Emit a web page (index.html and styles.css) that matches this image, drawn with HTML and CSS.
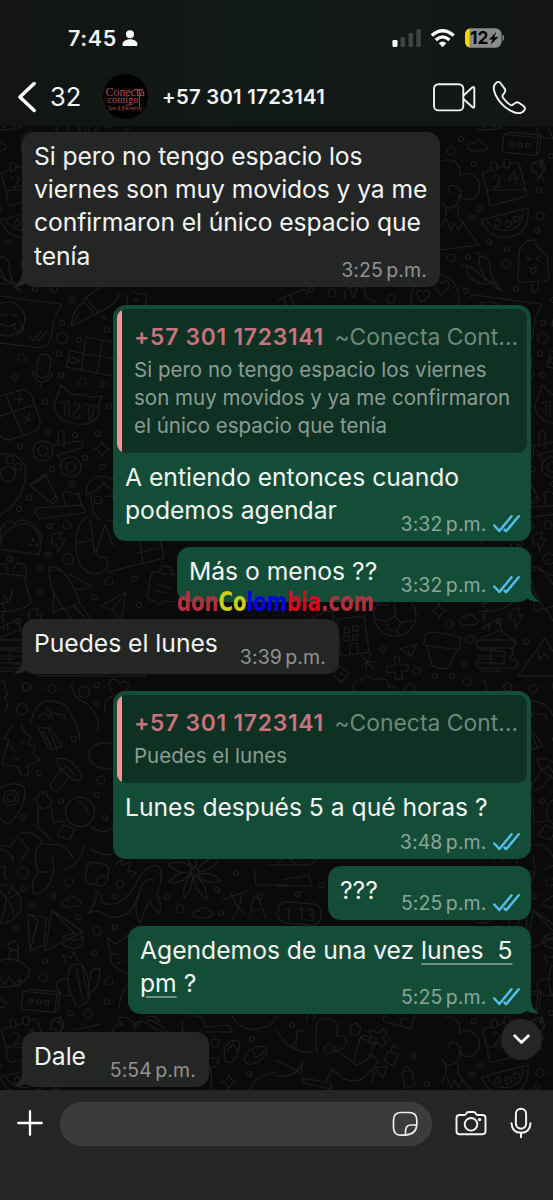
FILE: index.html
```html
<!DOCTYPE html>
<html lang="es">
<head>
<meta charset="utf-8">
<title>Chat</title>
<link rel="stylesheet" href="styles.css">
</head>
<body>
<svg class="defs" width="0" height="0" aria-hidden="true">
  <symbol id="ticks" viewBox="0 0 27 18"><path d="M1.300 10.500 6.300 16 18.500 1.300M12.500 15.800 13.300 16 25.700 1.300M11.500 14.600l1.600 1.500" fill="none" stroke="#53bdeb" stroke-width="2.500" stroke-linecap="round" stroke-linejoin="round"/></symbol>
  <symbol id="tail" viewBox="0 0 18 18"><path d="M8 0V4C8 9.500 4.500 14.500 0 17.200C5 18 9 16.500 11.500 14.500L18 17V0Z"/></symbol>
</svg>
<div class="phone">
  <header class="top">
    <div class="status">
      <span class="clock">7:45</span>
      <svg class="person" width="16" height="17" viewBox="0 0 16 17" fill="#fff"><circle cx="8" cy="4.200" r="4"/><path d="M.5 14.500C.5 11.500 4 9.300 8 9.300s7.500 2.200 7.500 5.200c0 1-.6 1.600-1.500 1.600H2c-.9 0-1.500-.6-1.500-1.600Z"/></svg>
      <svg class="radio" width="112" height="22" viewBox="392 26 112 22">
        <rect x="392.500" y="39" width="5" height="7" rx="1.300" fill="#fff"/>
        <g fill="#3d4241"><rect x="400.500" y="36" width="4.600" height="10" rx="1.300"/><rect x="408.500" y="32" width="4.600" height="14" rx="1.300"/><rect x="416.300" y="28" width="4.600" height="18" rx="1.300"/></g>
        <g fill="none" stroke="#fff" stroke-width="3.300"><path d="M431.800 34.400Q442.500 25 453.700 34.400"/><path d="M435.800 39Q442.500 32.800 449.500 39"/></g>
        <path d="M438.800 42.200Q442.500 39 446.300 42.200L442.500 46.200Z" fill="#fff"/>
        <clipPath id="cell"><rect x="465" y="27.300" width="36.500" height="19.400" rx="6"/></clipPath>
        <g clip-path="url(#cell)"><rect x="465" y="27" width="37" height="20" fill="#898b8a"/><rect x="465" y="27" width="4.500" height="20" fill="#ffd60a"/></g>
        <path d="M502.300 33.500Q504.600 34.500 504.300 37T502.300 40.500Z" fill="#7b7d7c"/>
        <text x="470" y="43.300" class="charge" textLength="18.500" lengthAdjust="spacingAndGlyphs">12</text>
        <path d="M496.300 31 488.800 38.500H492.600L490.500 43.800 498.500 36H494.400Z" fill="#050505"/>
      </svg>
    </div>
    <div class="contact">
      <svg class="back" width="20" height="32" viewBox="0 0 20 32" fill="none" stroke="#fff" stroke-width="3.500" stroke-linecap="round" stroke-linejoin="round"><path d="M17.200 2.500 2.900 16 17.200 29.500"/></svg>
      <span class="unread">32</span>
      <svg class="avatar" width="45" height="45" viewBox="0 0 45 45"><circle cx="22.500" cy="22.500" r="22.500" fill="#000"/>
        <g fill="#b34a50" class="logo"><text x="2.500" y="22" font-size="11.500" textLength="39" lengthAdjust="spacingAndGlyphs">Conecta</text><text x="4.500" y="29" font-size="10" textLength="31" lengthAdjust="spacingAndGlyphs">contigo</text></g>
        <path d="M36.500 15v18M31 15.500h9M23 30q2 4 5-1" fill="none" stroke="#b34a50" stroke-width=".8"/>
        <text x="5" y="36" class="motto" textLength="34" lengthAdjust="spacingAndGlyphs">Spa &amp; Bienestar</text></svg>
      <span class="number">+57 301 1723141</span>
      <svg class="calls" width="96" height="36" viewBox="431 79 96 36" fill="none" stroke="#f1f2f1" stroke-width="1.900" stroke-linejoin="round" stroke-linecap="round">
        <rect x="434" y="84.200" width="29.300" height="26.200" rx="4.500"/><path d="M463.500 95.500 472.500 87.300Q474.300 86 474.300 88.500V106Q474.300 108.500 472.500 107.300L463.500 99"/>
        <path d="M496.300 82.700Q498.800 80.800 500.600 83.300L504.600 88.600Q506.100 90.800 504.300 93L502.800 95Q502 96.300 503 97.700Q506.500 102.500 510.300 104.800Q511.900 105.700 513 104.600L515.200 103Q517 101.600 519.200 103L523.600 106Q525.800 107.700 524.300 110.200Q521.400 114.500 514.700 112.500C504.500 109 496.500 99.500 494.200 91Q492.700 85.500 496.300 82.700Z"/>
      </svg>
    </div>
  </header>

  <main class="chat">
    <svg class="wallpaper" width="553" height="964" viewBox="0 126 553 964">
      <defs>
        <path id="bolt" d="M0 3 9 0 8 7H13L6 20 5 12H0Z"/>
        <path id="cloud" d="M3 11Q-2 10 1 6Q3 3 6 5Q8-1 12 2Q16 3 15 5Q20 5 19 9Q17 13 11 11Q7 14 3 11Z"/>
        <path id="spark" d="M0-8Q1-1 8 0Q1 1 0 8Q-1 1-8 0Q-1-1 0-8Z"/>
        <g id="tile">
          <g transform="rotate(6 521 144)"><rect x="503" y="136" width="34" height="18" rx="2"/><path d="M505 136l4-3h31l-3 3M540 133v16l-3 4"/><circle cx="512" cy="145" r="2.300"/><circle cx="520" cy="145" r="2.300"/><circle cx="528" cy="145" r="2.300"/></g>
          <use href="#cloud" x="468" y="139"/>
          <path d="M491 170 484 172Q482 173 483 176L487 190H526L519 164Q518 161 515 162L510 164M498 168l6-2M487 190 489 203Q490 206 494 205L524 197Q527 196 526 192L520 183"/>
          <rect x="491" y="162" width="6" height="9" rx="3"/><rect x="504" y="159" width="6" height="9" rx="3"/>
          <path d="M492 178q5-5 8 0q0 4-6 10l9-2M514 171l-6 9 12-2M514 172l3 13"/>
          <use href="#bolt" x="532" y="160"/>
          <path d="M442 161C456 157 462 166 459 176C470 169 482 179 479 190C476 203 462 201 459 194C461 208 446 213 442 202M450 193Q446 183 456 186Q462 190 461 197M446 206V216M458 206V216L479 245 441 250M442 226Q445 215 447 220L451 231 454 223 459 230 463 222"/>
          <path d="M481 220 528 208Q530 234 509 237Q490 240 481 220ZM486 219Q494 233 510 230Q524 226 523 210"/><path d="M498 219q-6 8 0 7t0-7M506 220q-1 10 4 6t-4-6M513 217q2 8 6 3t-6-3"/>
          <path d="M518 279 519 252Q523 239 536 240Q535 246 539 247Q541 253 547 255L549 275Q550 280 544 281L524 282Q518 283 518 279ZM532 283v8q3 4 6 0v-9M526 257l4 2-4 3M540 256l-4 3 4 2M528 267q5 3 8-1M531 269q0 8 5 2v-3"/>
          <path d="M466 268Q471 264 480 275Q486 282 498 283Q478 287 469 276ZM479 258Q488 253 490 266Q491 282 502 291Q486 284 480 267ZM476 253q4-2 5 5M462 266q5-2 8 2"/>
          <circle cx="435" cy="298" r="24"/><path d="M422 302C411 289 421 288 423 293C429 285 434 296 422 302ZM441 295C428 283 440 279 442 284C448 275 455 288 441 295Z"/>
          <path d="M345 299Q342 291 352 286Q349 293 354 298Q356 283 365 288Q362 297 375 302M278 300l26-11q4 2 3 9M291 295l3 11M284 298l2 7"/>
          <path d="M-13 298Q-9 293 0 296L60 304Q63 306 58 310Q53 319 52 334Q49 351 33 347L-14 341"/><circle cx="8" cy="319" r="17"/><path d="M1 316q3-4 6 0M13 316q3-3 5 1M-1 323q11 6 17 0M14 326l4 7q7 0 5-7l-4-6M29 337l4 4 8-9M36 340l3 1 7-9"/>
          <path d="M71 326Q73 308 84 302L94 313Q84 322 71 326ZM71 326l9-13M82 301l4-4 12 15-4 4M87 297Q98 287 108 285M98 312Q116 306 119 294M102 317q5 4 3-1"/>
          <path d="M86 337 112 342M86 337 81 371M102 341 97 374M70 351 115 359M66 367 112 376M70 351 66 367M75 359a3 3 0 1 0-1 4l5-2-4-2"/>
          <path d="M131 292l16 3-2 12M128 294l-2 16M136 297v5M133 300h6"/>
          <rect x="37" y="354" width="13" height="24" rx="6" transform="rotate(9 43 366)"/><path d="M32 370Q35 382 42 382Q50 382 53 372M41 382l-1 5"/>
          <rect x="-6" y="393" width="43" height="44" rx="10" transform="rotate(-18 15 415)"/><path d="M6 396l17 40M-6 418l40-13M15 399l9 0M20 394l-1 10M23 416l8 5M30 413l-5 10"/>
          <path d="M61 385 72 395Q82 393 91 397L102 396Q98 404 99 412Q95 426 78 424Q55 422 54 405Q56 399 58 394ZM60 403l9-2v16M65 404v11M85 404l12 3M89 407v14M94 408l-3 13M74 405q4-5 6 0q-1 5-3 5q-6 4-2 8q5 2 5-4"/>
          <circle cx="43" cy="451" r="10"/><circle cx="43" cy="451" r="5"/><circle cx="71" cy="467" r="10"/><circle cx="71" cy="467" r="5"/><path d="M52 446 78 441Q84 442 82 448L57 455M58 445V433q3-5 6 0v14M57 455q7 5 3 13"/>
          <use href="#spark" x="102" y="449"/>
          <circle cx="8" cy="474" r="7.500"/><circle cx="10" cy="460" r="4"/><circle cx="18" cy="467" r="3.300"/><path d="M0 455Q17 450 25 466C28 485 18 505 0 515"/>
          <path d="M30 485 45 474 56 496 50 502ZM33 484l12-8M50 502l2 2 6-4-2-4M37 514Q32 512 37 508L82 505Q88 512 82 513L39 519ZM65 506l-2-13q6-4 9 1l7-1 2 12"/>
          <path d="M0 544Q5 524 26 524Q45 530 39 555L0 549M1 540Q-2 530 4 525Q8 518 15 524Q21 517 27 522Q35 521 37 530Q44 534 41 542"/><g fill="#1d1e1e"><circle cx="33" cy="540" r="1"/><circle cx="30" cy="545" r="1"/><circle cx="37" cy="545" r="1"/></g>
          <use href="#bolt" x="52" y="532"/><use href="#bolt" x="29" y="608"/>
          <path d="M86 495Q86 478 101 476Q121 478 119 495Q109 491 104 482Q98 491 86 495ZM91 496Q92 520 102 519M94 498q5-3 8 0v5q-5 2-8-1ZM105 497q5-2 9 0M87 517Q76 524 76 543Q76 572 95 574Q111 572 107 557Q96 560 94 548L90 519M76 543l17-3M96 553 105 525 113 545M108 572 164 558 156 520M138 532l5 30M137 553l26-6M106 520q15 0 18 20"/>
          <path d="M-3 573 24 576 31 603Q16 614-2 611M13 572q1-10 8-9q7 3 5 14M-2 604q16 0 14-16"/><path d="M0 565l6-2 1 9"/>
          <path d="M49 568Q61 562 75 590L80 603 64 609Q49 590 49 568ZM51 571q5-3 10 0M69 574 91 586Q91 590 76 589M54 592 53 612 64 608M80 603 90 618M74 606l10 11M65 609l9 15 3-2"/>
          <path d="M101 606 126 592 121 622 112 610ZM126 592l-14 18"/>
          <path d="M151 575Q153 570 160 573L176 575M151 575 147 597Q151 601 156 601L158 605 163 601 176 602M159 573Q162 562 171 568Q174 572 173 576M154 584l17 4M153 590l14 3"/>
          <path d="M0 628 17 620 22 633M-6 640h28M-3 648H20M-4 656H22M-2 663H21M0 671H20M7 612q-7-7-2-9t-2-8"/>
          <circle cx="395" cy="615" r="21"/><path d="M386 621 395 616 401 623 397 631 388 629ZM395 616V602M401 623l12-3M386 621l-10-2M378 604l8 2 6-8M397 631l4 5"/>
          <path d="M337 619 364 616 369 652 341 656ZM350 654v-10l7-1 1 11M311 619q13-8 22-8l3 44"/><path d="M344 628h5v5h-5zM353 626h5v5h-5zM344 636h5v5h-5zM353 635h5v5h-5z"/>
          <path d="M425 634Q432 629 461 638L459 650 424 645ZM427 646 432 666Q440 670 449 668L457 650M400 649 417 644 411 657ZM411 657l-3-7"/>
          <use href="#spark" x="439" y="611"/><use href="#cloud" x="459" y="613"/>
          <path d="M481 638 500 630 518 643M480 640h32q6 4 0 8h-34q-5-4 2-8ZM480 650h16M510 648q7 3 0 9M478 659h17M510 659h5q5 4 0 9h-37q-4-5 1-9M491 651h13v13h-13zM485 631l-1-5 5-1v5M485 621q-4-4 0-8"/>
          <path d="M518 676 545 638 568 676ZM537 650l3 10 4-7 6 6"/>
          <path d="M361 655l6 7 4-8M361 666l6-4 7 7M367 662l9-1M367 662l-1 8M387 667l8-2-1-8 5 0 1 8h8v6h-7l2 8-7 1-1-8-8 1ZM333 674l7-8 9 7-8 9ZM354 691Q350 682 361 681Q364 672 375 680Q388 675 389 687Q398 684 394 692M404 690l6-7 5 5-3 4"/>
          <circle cx="341" cy="674" r="1"/><path d="M37 676h109q-8-10-10-7M30 725Q35 703 46 701Q65 700 71 714Q79 727 80 742M38 718q7-9 11 0 3-8 10-3 7-2 6 4M46 707l8 12M72 683Q70 696 87 704Q102 718 97 730M2 680q5 4 3 8 4 6 0 10 5 7 0 14"/>
          <path d="M105 712q-2-14 8-16M110 687a5 5 0 1 1 9-3a5 5 0 1 1 2 7a5 5 0 1 1-10-3M150 695q7-5 11 0"/>
          <path d="M12 725 4 740 9 739 2 764 18 767 21 775 29 775 27 766 40 760 33 754 35 747 28 744 31 737 23 731 21 723M10 745l3 5M21 744l4-3M14 757l4 3M38 728l12 22 12-4-12-18ZM43 731l10 19M48 728l9 21"/>
          <path d="M57 759Q69 755 81 773Q84 782 74 780L60 769Q56 761 57 759ZM61 770 50 785Q52 793 60 789L70 776M61 768q4 3 5-2 5 3 7 8M90 750Q85 769 112 769M112 744Q98 740 90 750"/>
          <path d="M-2 789Q14 780 24 787Q28 806 8 825L-2 817"/><circle cx="11" cy="798" r="7.500"/><circle cx="11" cy="798" r="4"/>
          <circle cx="80" cy="812" r="14.500"/><path d="M78 801q9 4 10 14M39 805q-6-8 0-9 2-9 4-2 4-6 4 2 6 2 3 10l-8 3ZM38 807V827L50 839M52 808l1 14 14-1M91 827q13 9 22 0M64 825l10 4-4 11-13-4ZM42 842Q34 830 20 833L10 847 0 845M20 838l9 12-9 12M0 849q13 3 13 13M42 842Q31 851 38 872Q29 885 34 894Q48 894 54 871L52 855M38 872l16 0M85 843Q80 867 62 869M56 855M43 844l17 1q9 3 13 14M91 849q15 9 22 4"/>
          <rect x="86" y="863" width="22" height="22" rx="6" transform="rotate(10 97 874)"/><path d="M96 884q0-9 10-8M115 865l6-5 2 5 8-3-3 9 8 1-4 6M0 868l5-2-1 7 2 6"/>
          <use href="#cloud" x="62" y="895"/><use href="#cloud" x="193" y="906"/>
          <circle cx="2" cy="904" r="19"/><path d="M-8 888q14 5 14 12T0 923M6 900l14-8M8 894l5-9M9 901l5 14"/>
          <path d="M88 914Q100 895 95 892Q101 889 102 903Q123 910 138 880Q147 863 158 866Q165 874 157 894Q163 905 159 913Q152 908 150 901Q145 908 140 923Q134 911 137 898Q131 920 108 917Q97 907 88 914ZM153 880Q141 877 138 899"/>
          <g transform="translate(195 872)"><circle r="3.500"/><path d="M0-4Q-10-10-8-24Q4-15 0-4ZM3-3Q11-15 24-14Q19-2 4 0ZM4 2Q18-1 26 9Q12 13 3 4ZM1 4Q11 11 12 27Q-2 17-1 4ZM-2 4Q-3 19-11 26Q-13 12-4 3ZM-4 1Q-15 14-27 10Q-17-1-4 0ZM-4-1Q-17 4-27-8Q-12-13-3-4Z"/></g>
          <path d="M222 900l25-9M230 892l3 6q6 14 12 15M241 895q0 12-9 24M249 919l4-20q4-4 6 1l7 18M252 911l8-2M254 867l2 18h31M266 865h42q9-2 10-10M283 880l25-5 4 11h-35M278 862l10-5 8 8"/>
          <rect x="278" y="903" width="43" height="21" rx="8" transform="rotate(5 300 913)"/><path d="M285 909l4-1v12M294 911v1M294 917v1M299 909l3-1v12M307 911q7-4 7 1l-4 3q8 1 2 6l-6-1"/>
          <path d="M28 914 46 918 44 945 30 951ZM28 914l10 6-8 31M52 910 83 932 45 951ZM52 910l23 24"/><path d="M63 937q10-7 20 0v8q-10 7-20 0ZM63 937q10 6 20 0"/>
          <path d="M-5 963Q15 952 30 970Q25 991-5 986M9 960V952q5-4 9 0v8M12 951Q3 945 14 941Q21 946 17 951M0 976l4 9 5-8 5 7 7-5-2 7"/>
          <path d="M70 967q5-5 12-2 8 8 7 35-13 12-15 0-10-16-4-33ZM76 968l7 34M82 965l6 33M66 963l-3-8 8 3 3-6 4 9M69 979Q57 977 56 987Q63 1000 72 994M90 978q0-12 10-9-1 20-10 24M64 967"/>
          <path d="M107 938l8 6q10-6 15-10M107 938q2 10 4 17-3 12 18 19M112 953l6 2M116 963l6-1M119 1007q3-20 10-22"/>
          <path d="M112 1032q3-9 12-6-10-8-3-9 11 0 14 9M133 1028Q139 1014 156 1030M145 1018q10-5 15 4-8-3-14-2 20 4 23 17-8-8-18-9M120 1050 142 1020M182 1021Q181 1036 190 1038M190 1016q15-2 15 11l24-2 3 7H205M232 1016q11 20 36 10 9-7 8-10M51 1020l9 2 1-6 3 11-4 4 3 8M74 1030 100 1024"/>
          <path d="M225 1061Q222 1045 231 1041Q242 1038 239 1048Q235 1067 225 1061ZM227 1051l6-7 5 7M244 1060Q246 1047 263 1046Q271 1051 262 1059Q248 1069 244 1060ZM253 1051l3 7 9-7M211 1058h7q1 9-6 9M211 1067V1090M205 1055l6 18M250 1090q5-14 27-18"/><use href="#spark" x="229" y="1082"/>
          <path d="M276 1029l9 14q18 13 28 8M276 1060l25 13 2-12Q296 1080 276 1075M302 1078l29 5v6l-28-6ZM317 1052q-3-12 0-17-3-14 6-16 12-2 15 7-2 8-1 10 15 0 6 12-10 6-13 3M329 1044a5 5 0 1 0 .1 0M334 1050q16 8 22 15 8-2 16-10l7 7-16 16q-7 5-19 1l-12-10-6 12M354 1060l6-22 16 5-7 13M360 1038l4-3 12 4v5M374 1071l-2 12"/>
          <path d="M350 1026l6-3 5 5-3 7h-7ZM373 1030l5 3 5-4 4 4-4 5 4 5-5 4-5-5-5 3-4-4 4-5-3-5ZM388 1051l10 4-4 11-10-5ZM390 1051q5-10 8-2M402 1072l10-2 3 16-10 2ZM404 1071q0-9 6-1M375 1068l12-2-4 12Z"/>
          <path d="M306 1021l2-8 8-2-2 8M296 1042l2-13 5 3M295 1043a2 2 0 1 0 .1 0M386 1009l-3 12 28 8 4-16M400 1025q1-10 8-5"/>
        </g>
        <g id="dots"><circle cx="461" cy="139" r="2.500"/><circle cx="451" cy="151" r="4"/><circle cx="474" cy="164" r="2.500"/><circle cx="539" cy="190" r="2.500"/><circle cx="540" cy="216" r="4"/><circle cx="537" cy="230" r="2.500"/><circle cx="480" cy="209" r="2.500"/><circle cx="472" cy="218" r="2.500"/><circle cx="489" cy="242" r="2.500"/><circle cx="507" cy="249" r="2.500"/><circle cx="451" cy="258" r="4"/><circle cx="468" cy="257" r="2.500"/><circle cx="506" cy="264" r="4"/><circle cx="466" cy="291" r="2.500"/><circle cx="516" cy="289" r="2.500"/><circle cx="332" cy="293" r="4"/><circle cx="391" cy="299" r="4"/><circle cx="311" cy="290" r="2.500"/><circle cx="72" cy="300" r="2.500"/><circle cx="62" cy="323" r="2.500"/><circle cx="62" cy="338" r="5.500"/><circle cx="79" cy="340" r="2.500"/><circle cx="107" cy="330" r="2.500"/><circle cx="22" cy="358" r="4"/><circle cx="59" cy="354" r="2.500"/><circle cx="15" cy="377" r="2.500"/><circle cx="61" cy="375" r="2.500"/><circle cx="82" cy="382" r="4"/><circle cx="102" cy="384" r="2.500"/><circle cx="45" cy="402" r="2.500"/><circle cx="109" cy="406" r="2.500"/><circle cx="47" cy="432" r="2.500"/><circle cx="75" cy="435" r="2.500"/><circle cx="98" cy="434" r="2.500"/><circle cx="20" cy="446" r="2.500"/><circle cx="85" cy="458" r="2.500"/><circle cx="102" cy="467" r="2.500"/><circle cx="52" cy="469" r="2.500"/><circle cx="72" cy="484" r="2.500"/><circle cx="29" cy="498" r="2.500"/><circle cx="19" cy="509" r="2.500"/><circle cx="50" cy="526" r="2.500"/><circle cx="67" cy="525" r="4"/><circle cx="68" cy="559" r="5.500"/><circle cx="48" cy="555" r="2.500"/><circle cx="10" cy="559" r="2.500"/><circle cx="40" cy="569" r="2.500"/><circle cx="109" cy="581" r="4"/><circle cx="134" cy="579" r="2.500"/><circle cx="40" cy="591" r="2.500"/><circle cx="94" cy="597" r="2.500"/><circle cx="139" cy="605" r="2.500"/><circle cx="18" cy="621" r="2.500"/><circle cx="449" cy="624" r="4"/><circle cx="470" cy="639" r="4"/><circle cx="499" cy="621" r="2.500"/><circle cx="526" cy="642" r="2.500"/><circle cx="383" cy="649" r="2.500"/><circle cx="465" cy="664" r="2.500"/><circle cx="417" cy="671" r="4"/><circle cx="435" cy="676" r="2.500"/><circle cx="452" cy="676" r="2.500"/><circle cx="467" cy="682" r="4"/><circle cx="507" cy="687" r="4"/><circle cx="27" cy="687" r="4"/><circle cx="52" cy="689" r="4"/><circle cx="84" cy="692" r="5.500"/><circle cx="97" cy="685" r="2.500"/><circle cx="96" cy="703" r="2.500"/><circle cx="22" cy="709" r="5.500"/><circle cx="74" cy="739" r="2.500"/><circle cx="39" cy="773" r="2.500"/><circle cx="101" cy="780" r="4"/><circle cx="97" cy="795" r="2.500"/><circle cx="61" cy="801" r="2.500"/><circle cx="23" cy="817" r="2.500"/><circle cx="105" cy="818" r="2.500"/><circle cx="23" cy="873" r="5.500"/><circle cx="24" cy="889" r="2.500"/><circle cx="69" cy="882" r="4"/><circle cx="120" cy="884" r="4"/><circle cx="53" cy="896" r="2.500"/><circle cx="32" cy="906" r="2.500"/><circle cx="78" cy="917" r="2.500"/><circle cx="16" cy="928" r="2.500"/><circle cx="97" cy="931" r="4"/><circle cx="115" cy="927" r="2.500"/><circle cx="115" cy="896" r="2.500"/><circle cx="167" cy="897" r="2.500"/><circle cx="180" cy="909" r="4"/><circle cx="217" cy="890" r="2.500"/><circle cx="236" cy="873" r="2.500"/><circle cx="221" cy="913" r="2.500"/><circle cx="260" cy="896" r="2.500"/><circle cx="298" cy="894" r="2.500"/><circle cx="322" cy="885" r="2.500"/><circle cx="94" cy="953" r="2.500"/><circle cx="45" cy="961" r="2.500"/><circle cx="43" cy="978" r="4"/><circle cx="109" cy="981" r="4"/><circle cx="107" cy="1002" r="2.500"/><circle cx="70" cy="1013" r="2.500"/><circle cx="88" cy="1013" r="4"/><circle cx="215" cy="1043" r="4"/><circle cx="252" cy="1039" r="2.500"/><circle cx="249" cy="1074" r="2.500"/><circle cx="292" cy="1025" r="2.500"/><circle cx="413" cy="1056" r="2.500"/><circle cx="427" cy="1084" r="2.500"/></g>
        <g id="row"><use href="#tile"/><use href="#dots"/><use href="#tile" x="481"/><use href="#dots" x="481"/><use href="#tile" x="-481"/><use href="#dots" x="-481"/></g>
      </defs>
      <g fill="none" stroke="#1d1e1e" stroke-width="1.200" stroke-linecap="round" stroke-linejoin="round"><use href="#row"/><use href="#row" y="857"/><use href="#row" y="-857"/></g>
    </svg>

    <div class="messages">
      <article class="bubble in m1"><p class="text">Si pero no tengo espacio los<br>viernes son muy movidos y ya me<br>confirmaron el único espacio que<br>tenía</p><div class="meta">3:25&#8198;p.m.</div><svg class="tail" width="18" height="18"><use href="#tail"/></svg></article>

      <article class="bubble out m2"><blockquote class="quote"><div class="who"><b>+57 301 1723141</b><span>~Conecta Cont...</span></div><p>Si pero no tengo espacio los viernes<br>son muy movidos y ya me confirmaron<br>el único espacio que tenía</p></blockquote><p class="text">A entiendo entonces cuando<br>podemos agendar</p><div class="meta">3:32&#8198;p.m.<svg class="ticks" width="27" height="18"><use href="#ticks"/></svg></div></article>

      <article class="bubble out m3"><p class="text">Más o menos ??</p><div class="meta">3:32&#8198;p.m.<svg class="ticks" width="27" height="18"><use href="#ticks"/></svg></div><svg class="tail" width="18" height="18"><use href="#tail"/></svg>
        <svg class="watermark" width="200" height="34" viewBox="0 0 200 34"><text x="0" y="25" textLength="197" lengthAdjust="spacingAndGlyphs"><tspan fill="#b33040">don</tspan><tspan fill="#c9d016">Co</tspan><tspan fill="#0505e6">lom</tspan><tspan fill="#dc061f">bia</tspan><tspan fill="#b33040">.com</tspan></text></svg>
      </article>

      <article class="bubble in m4"><p class="text">Puedes el lunes</p><div class="meta">3:39&#8198;p.m.</div><svg class="tail" width="18" height="18"><use href="#tail"/></svg></article>

      <article class="bubble out m5"><blockquote class="quote"><div class="who"><b>+57 301 1723141</b><span>~Conecta Cont...</span></div><p>Puedes el lunes</p></blockquote><p class="text">Lunes después 5 a qué horas ?</p><div class="meta">3:48&#8198;p.m.<svg class="ticks" width="27" height="18"><use href="#ticks"/></svg></div></article>

      <article class="bubble out m6"><p class="text">???</p><div class="meta">5:25&#8198;p.m.<svg class="ticks" width="27" height="18"><use href="#ticks"/></svg></div></article>

      <article class="bubble out m7"><p class="text">Agendemos de una vez <span class="date">lunes  5</span><br><span class="date">pm</span> ?</p><div class="meta">5:25&#8198;p.m.<svg class="ticks" width="27" height="18"><use href="#ticks"/></svg></div><svg class="tail" width="18" height="18"><use href="#tail"/></svg></article>

      <article class="bubble in m8"><p class="text">Dale</p><div class="meta">5:54&#8198;p.m.</div><svg class="tail" width="18" height="18"><use href="#tail"/></svg></article>
    </div>
    <button class="jump" aria-label="Bajar"><svg width="17" height="11" viewBox="0 0 17 11" fill="none" stroke="#fff" stroke-width="2.700" stroke-linecap="round" stroke-linejoin="round"><path d="M1.700 1.700 8.500 8.500 15.300 1.700"/></svg></button>
  </main>

  <footer class="composer">
    <svg class="plus" width="26" height="26" viewBox="0 0 26 26" stroke="#fff" stroke-width="2.300" stroke-linecap="round"><path d="M13 1.200V24.800M1.200 13H24.800"/></svg>
    <div class="field"><svg width="26" height="26" viewBox="0 0 26 26" fill="none" stroke="#eceded" stroke-width="1.700" stroke-linejoin="round"><path d="M13.500 24.200Q25 23 24.800 12.500V9Q24.800 1.500 17 1.500H9Q1.500 1.500 1.500 9V16.500Q1.500 24.200 9 24.200ZM13.500 24.200V20.500Q13.500 14 19 14H24.500"/></svg></div>
    <svg class="camera" width="32" height="26" viewBox="0 0 32 26" fill="none" stroke="#f4f4f4" stroke-width="1.900" stroke-linejoin="round"><path d="M4.500 5H9.300Q10.700 5 11.300 3.500T13.500 2H18.500Q20 2 20.700 3.500T22.700 5H27.500Q30.500 5 30.500 8V21.300Q30.500 24.200 27.500 24.200H4.500Q1.500 24.200 1.500 21.300V8Q1.500 5 4.500 5Z"/><circle cx="16" cy="14.300" r="6.300"/><circle cx="24.600" cy="9.600" r="1.700" fill="#f4f4f4" stroke="none"/></svg>
    <svg class="mic" width="22" height="32" viewBox="0 0 22 32" fill="none" stroke="#f4f4f4" stroke-width="2" stroke-linecap="round"><rect x="5.900" y="1.700" width="10.200" height="20" rx="5.100"/><path d="M1.500 16.300Q2.300 25.800 11 25.800T20.500 16.300M11 26V30.300"/></svg>
  </footer>
</div>
</body>
</html>
```
FILE: styles.css
```css
* { box-sizing: border-box; }
body { margin: 0; background: #0a0a0a; font-family: Inter, "Liberation Sans", sans-serif; color: #f3f4f4; }
p, blockquote { margin: 0; }
.defs { display: block; }
.phone { width: 553px; height: 1200px; display: flex; flex-direction: column; overflow: hidden; }

.top { height: 126px; background: linear-gradient(90deg, #121414, #111917 45%, #111816 75%, #131514); display: flex; flex-direction: column; flex: none; }
.status { display: flex; align-items: center; height: 56px; padding: 20px 49px 0 68px; }
.clock { font-size: 21.5px; font-weight: 600; letter-spacing: .6px; width: 54px; white-space: nowrap; }
.person { margin-top: 1px; }
.radio { margin-left: auto; }
.charge { font-size: 18px; font-weight: 700; fill: #050505; }
.contact { display: flex; align-items: center; height: 60px; margin-top: 12px; padding: 0 26px 0 17px; }
.unread { font-size: 25.5px; width: 53px; margin-left: 13px; }
.logo { font-family: "Liberation Serif", serif; }
.motto { font-size: 5px; fill: #a04449; }
.number { font-size: 20.300px; font-weight: 600; margin-left: 14px; white-space: nowrap; letter-spacing: .27px; }
.calls { margin-left: auto; }

.chat { display: grid; height: 964px; flex: none; position: relative; overflow: hidden; }
.wallpaper { grid-area: 1 / 1; display: block; }
.messages { grid-area: 1 / 1; position: relative; display: flex; flex-direction: column; padding: 6px 22px 0; }
.bubble { position: relative; display: grid; border-radius: 13px; align-content: start; }
.in { align-self: flex-start; background: #242625; --fill: #242625; }
.out { align-self: flex-end; background: #144d37; --fill: #144d37; }
.text { font-size: 24.7px; line-height: 33.4px; letter-spacing: -.02px; padding: 7.500px 12px 0; white-space: pre; grid-column: 1; }
.m1 .text { letter-spacing: -.1px; }
.meta { position: absolute; right: 13px; bottom: 5px; display: flex; align-items: center; font-size: 19.500px; line-height: 24px; letter-spacing: .1px; white-space: nowrap; color: #929393; }
.out .meta { right: 11.500px; color: #8aa699; }
.ticks { margin-left: 6px; }
.tail { position: absolute; left: -8px; bottom: -.4px; fill: var(--fill); }
.out .tail { left: auto; right: -8px; transform: scaleX(-1); }
.m1 { width: 418px; height: 155px; }
.m2 { width: 418px; height: 236px; margin-top: 18px; }
.m3 { width: 354px; height: 55px; margin-top: 6px; }
.m4 { width: 317px; height: 55px; margin-top: 17px; }
.m5 { width: 418px; height: 168px; margin-top: 17px; }
.m6 { width: 203px; height: 54px; margin-top: 7px; }
.m7 { width: 403px; height: 88px; margin-top: 6px; }
.m8 { width: 187px; height: 55px; margin-top: 18px; }
.date { text-decoration: underline; text-decoration-color: #6d9282; text-decoration-thickness: 2px; text-underline-offset: 4px; }

.quote { margin: 4px 4px 0; height: 144px; border-radius: 9px; background: linear-gradient(90deg, #fc8f9a 5.500px, #0e3124 5.500px); overflow: hidden; padding: 12px 0 0 17px; }
.m5 .quote { height: 88px; }
.who { display: flex; gap: 11px; font-size: 22.800px; line-height: 32px; white-space: nowrap; color: #6f887e; letter-spacing: .05px; }
.who b { font-weight: 600; color: #c7747f; letter-spacing: .75px; margin-right: -.5px; }
.quote p { font-size: 20.500px; line-height: 28.300px; margin-top: 2.500px; white-space: nowrap; color: #8b9c95; letter-spacing: .01px; }

.watermark { position: absolute; left: 0; top: 39px; z-index: 2; overflow: visible; font: 700 27px "DejaVu Sans Condensed", "DejaVu Sans", sans-serif; }
.jump { position: absolute; right: 11.500px; top: 892.500px; width: 41px; height: 41px; border: 0; border-radius: 50%; background: #242625; display: grid; place-items: center; padding: 0; }

.composer { flex: 1; background: #242625; display: flex; align-items: flex-start; padding: 12px 21px 0 17px; }
.plus { margin-top: 8px; }
.field { width: 372px; height: 44px; margin-left: 17px; border-radius: 22px; background: #3a3c3b; border: 1px solid #404241; display: flex; align-items: center; justify-content: flex-end; padding-right: 13px; }
.camera { margin: 8px 0 0 23px; }
.mic { margin: 5px 0 0 auto; }
```
